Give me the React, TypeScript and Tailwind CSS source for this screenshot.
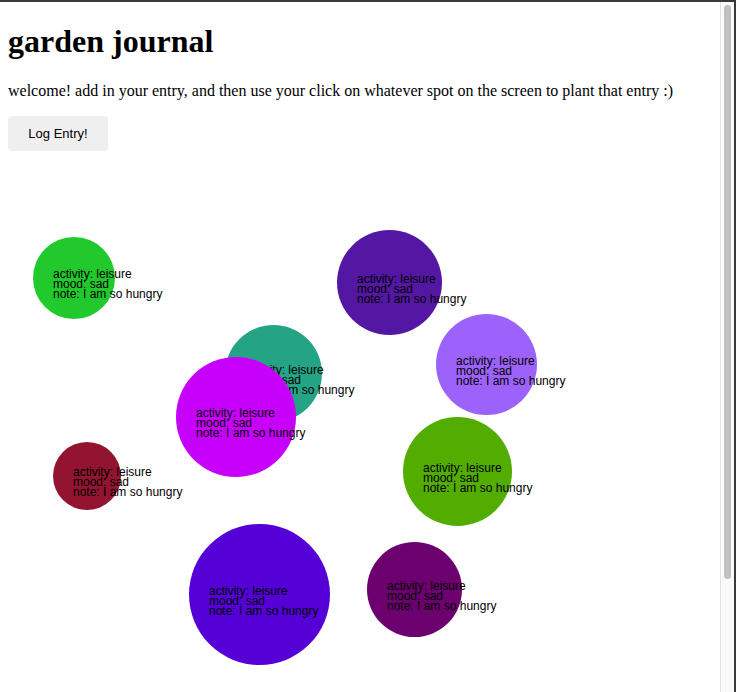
import { useState } from "react";

type Entry = {
  id: number;
  x: number;
  y: number;
  size: number;
  color: string;
  activity: string;
  mood: string;
  note: string;
};

// posiciones donde se "plantaron" las entradas (coordenadas del click)
const ENTRIES: Entry[] = [
  { id: 1, x: 33, y: 235, size: 82, color: "#22c92c", activity: "leisure", mood: "sad", note: "I am so hungry" },
  { id: 2, x: 337, y: 228, size: 105, color: "#5317a3", activity: "leisure", mood: "sad", note: "I am so hungry" },
  { id: 3, x: 436, y: 312, size: 101, color: "#9d62fb", activity: "leisure", mood: "sad", note: "I am so hungry" },
  { id: 4, x: 225, y: 323, size: 97, color: "#24a484", activity: "leisure", mood: "sad", note: "I am so hungry" },
  { id: 5, x: 176, y: 355, size: 120, color: "#c700fb", activity: "leisure", mood: "sad", note: "I am so hungry" },
  { id: 6, x: 53, y: 440, size: 68, color: "#931430", activity: "leisure", mood: "sad", note: "I am so hungry" },
  { id: 7, x: 403, y: 415, size: 109, color: "#52ad00", activity: "leisure", mood: "sad", note: "I am so hungry" },
  { id: 8, x: 189, y: 522, size: 141, color: "#5400d7", activity: "leisure", mood: "sad", note: "I am so hungry" },
  { id: 9, x: 367, y: 540, size: 95, color: "#6c006e", activity: "leisure", mood: "sad", note: "I am so hungry" },
];

function Flower({ entry }: { entry: Entry }) {
  return (
    <div
      className="absolute flex items-center rounded-full pl-5 pt-[12px]"
      style={{ left: entry.x, top: entry.y, width: entry.size, height: entry.size, backgroundColor: entry.color }}
    >
      <div className="whitespace-nowrap text-[12px] leading-[10px] text-black font-['Liberation_Sans',Arial,sans-serif]">
        <div>activity: {entry.activity}</div>
        <div>mood: {entry.mood}</div>
        <div>note: {entry.note}</div>
      </div>
    </div>
  );
}

export default function App() {
  const [entries] = useState<Entry[]>(ENTRIES);

  return (
    <div className="flex h-[692px] w-full border-t-2 border-r-2 border-[#3a3a3a] bg-white">
      <div className="flex-1 overflow-hidden">
        <div className="relative min-h-[821px] px-2 pt-[21.44px] text-black font-['Liberation_Serif','Times_New_Roman',serif]">
          <h1 className="text-[32px] leading-[normal] font-bold">garden journal</h1>
          <p className="mt-[21.44px] text-[16px] leading-[normal]">
            welcome! add in your entry, and then use your click on whatever spot on the screen to plant that entry :)
          </p>
          <button className="mt-4 h-[35px] w-[100px] rounded-[4px] bg-[#efefef] text-[13px] leading-[15px] text-black font-['Liberation_Sans',Arial,sans-serif]">
            Log Entry!
          </button>

          {entries.map((e) => (
            <Flower key={e.id} entry={e} />
          ))}
        </div>
      </div>

      {/* barra de scroll */}
      <div className="w-[14px] shrink-0 border-l border-[#e2e2e2] bg-[#fafafa] px-[3px] pt-[3px]">
        <div className="h-[574px] w-full rounded-full bg-[#c1c1c1]" />
      </div>
    </div>
  );
}
